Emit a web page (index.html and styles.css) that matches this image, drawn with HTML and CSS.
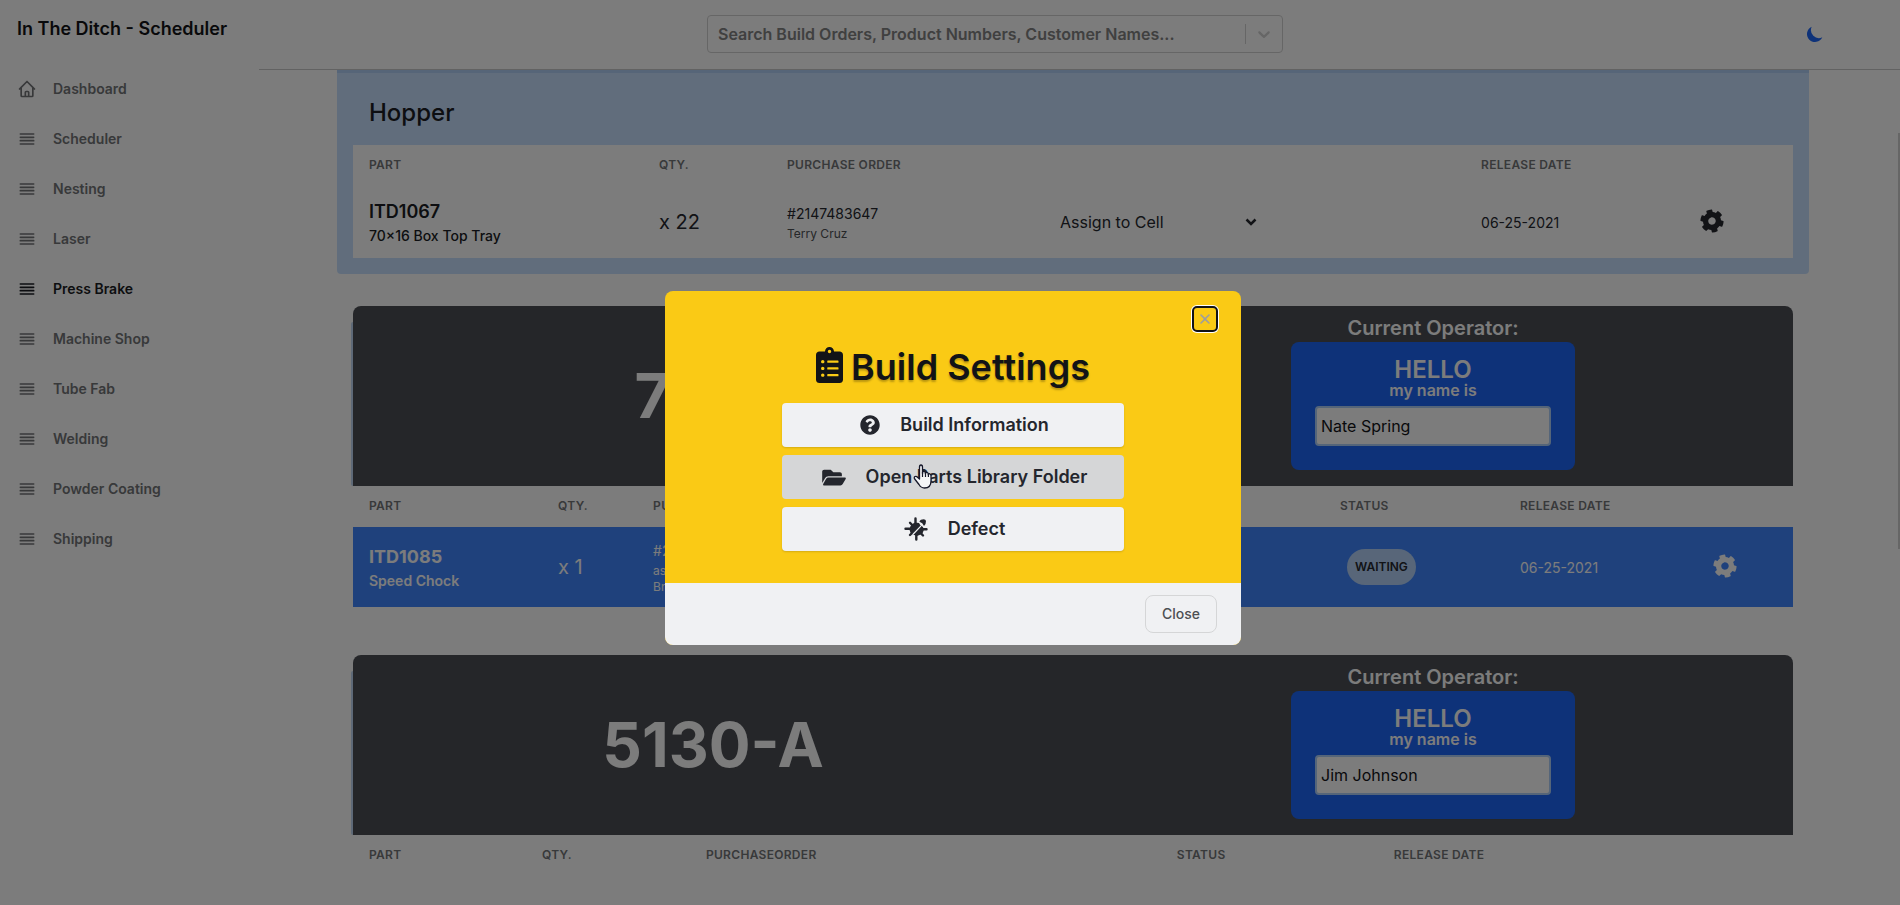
FILE: index.html
```html
<!DOCTYPE html>
<html lang="en">
<head>
<meta charset="utf-8">
<title>In The Ditch - Scheduler</title>
<link rel="stylesheet" href="styles.css">
</head>
<body>
<svg class="sprite" aria-hidden="true">
  <symbol id="i-lines" viewBox="0 0 24 24" fill="none" stroke="currentColor" stroke-width="2" stroke-linecap="round" stroke-linejoin="round"><path d="M4 6h16M4 10h16M4 14h16M4 18h16"/></symbol>
  <symbol id="i-home" viewBox="0 0 24 24" fill="none" stroke="currentColor" stroke-width="2" stroke-linecap="round" stroke-linejoin="round"><path d="M3 12l2-2m0 0l7-7 7 7M5 10v10a1 1 0 001 1h3m10-11l2 2m-2-2v10a1 1 0 01-1 1h-3m-6 0a1 1 0 001-1v-4a1 1 0 011-1h2a1 1 0 011 1v4a1 1 0 001 1m-6 0h6"/></symbol>
  <symbol id="i-gear" viewBox="0 0 512 512" fill="currentColor"><path d="M487.4 315.7l-42.6-24.6c4.3-23.2 4.3-47 0-70.2l42.6-24.6c4.9-2.8 7.1-8.6 5.5-14-11.1-35.6-30-67.8-54.7-94.6-3.8-4.1-10-5.1-14.8-2.3L380.8 110c-17.9-15.4-38.5-27.3-60.8-35.1V25.8c0-5.6-3.9-10.5-9.4-11.7-36.7-8.2-74.3-7.8-109.2 0-5.5 1.2-9.4 6.1-9.4 11.7V75c-22.2 7.9-42.8 19.8-60.8 35.1L88.7 85.5c-4.9-2.8-11-1.9-14.8 2.3-24.7 26.7-43.6 58.9-54.7 94.6-1.7 5.4.6 11.2 5.5 14L67.3 221c-4.3 23.2-4.3 47 0 70.2l-42.6 24.6c-4.9 2.8-7.1 8.6-5.5 14 11.1 35.6 30 67.8 54.7 94.6 3.8 4.1 10 5.1 14.8 2.3l42.6-24.6c17.9 15.4 38.5 27.3 60.8 35.1v49.2c0 5.6 3.9 10.5 9.4 11.7 36.7 8.2 74.3 7.8 109.2 0 5.5-1.2 9.4-6.1 9.4-11.7v-49.2c22.2-7.9 42.8-19.8 60.8-35.1l42.6 24.6c4.9 2.8 11 1.9 14.8-2.3 24.7-26.7 43.6-58.9 54.7-94.6 1.5-5.5-.7-11.3-5.6-14.1zM256 336c-44.100 0-80-35.900-80-80s35.900-80 80-80 80 35.900 80 80-35.900 80-80 80z" transform="rotate(-15 256 256)"/></symbol>
</svg>

<div class="app">
  <aside class="sidebar">
    <h1 class="brand">In The Ditch - Scheduler</h1>
    <nav class="menu">
      <a class="menu-item" href="#"><svg class="menu-icon"><use href="#i-home"/></svg>Dashboard</a>
      <a class="menu-item" href="#"><svg class="menu-icon"><use href="#i-lines"/></svg>Scheduler</a>
      <a class="menu-item" href="#"><svg class="menu-icon"><use href="#i-lines"/></svg>Nesting</a>
      <a class="menu-item" href="#"><svg class="menu-icon"><use href="#i-lines"/></svg>Laser</a>
      <a class="menu-item active" href="#"><svg class="menu-icon"><use href="#i-lines"/></svg>Press Brake</a>
      <a class="menu-item" href="#"><svg class="menu-icon"><use href="#i-lines"/></svg>Machine Shop</a>
      <a class="menu-item" href="#"><svg class="menu-icon"><use href="#i-lines"/></svg>Tube Fab</a>
      <a class="menu-item" href="#"><svg class="menu-icon"><use href="#i-lines"/></svg>Welding</a>
      <a class="menu-item" href="#"><svg class="menu-icon"><use href="#i-lines"/></svg>Powder Coating</a>
      <a class="menu-item" href="#"><svg class="menu-icon"><use href="#i-lines"/></svg>Shipping</a>
    </nav>
  </aside>

  <div class="page">
    <header class="topbar">
      <div class="search">
        <input class="search-input" type="text" aria-label="Search" placeholder="Search Build Orders, Product Numbers, Customer Names...">
        <span class="search-divider"></span>
        <button class="search-toggle" aria-label="Show options"><svg width="20" height="20" viewBox="0 0 20 20" fill="currentColor"><path d="M4.516 7.548c0.436-0.446 1.043-0.481 1.576 0l3.908 3.747 3.908-3.747c0.533-0.481 1.141-0.446 1.574 0 0.436 0.445 0.408 1.197 0 1.615-0.406 0.418-4.695 4.502-4.695 4.502-0.217 0.223-0.502 0.335-0.787 0.335s-0.570-0.112-0.789-0.335c0 0-4.287-4.084-4.695-4.502s-0.436-1.170 0-1.615z"/></svg></button>
      </div>
      <button class="theme" aria-label="Toggle color mode"><svg width="20" height="20" viewBox="0 0 20 20" fill="currentColor"><path d="M17.293 13.293A8 8 0 016.707 2.707a8.001 8.001 0 1010.586 10.586z"/></svg></button>
    </header>

    <main class="content">
      <div class="container">
        <section class="hopper">
          <h2 class="hopper-title">Hopper</h2>
          <table class="grid">
            <colgroup><col class="h-part"><col class="h-qty"><col class="h-po"><col class="h-assign"><col class="h-date"><col></colgroup>
            <thead><tr><th>Part</th><th>Qty.</th><th>Purchase Order</th><th></th><th>Release Date</th><th></th></tr></thead>
            <tbody><tr>
              <td><p class="part">ITD1067</p><p class="part-name">70×16 Box Top Tray</p></td>
              <td class="qty">x 22</td>
              <td class="po"><p class="po-number">#2147483647</p><p class="po-line">Terry Cruz</p></td>
              <td><div class="assign"><select class="assign-select" aria-label="Assign to Cell"><option>Assign to Cell</option></select><svg class="assign-arrow" width="16" height="12" viewBox="0 0 16 12" fill="none" stroke="currentColor" stroke-width="2.500"><path d="M3.500 3.500l4.500 4.500 4.500-4.500"/></svg></div></td>
              <td class="date">06-25-2021</td>
              <td class="tools"><button class="gear" aria-label="Build settings"><svg width="24" height="24"><use href="#i-gear"/></svg></button></td>
            </tr></tbody>
          </table>
        </section>

        <section class="cell">
          <div class="cell-head">
            <h2 class="cell-name">7230</h2>
            <div class="operator">
              <p class="operator-title">Current Operator:</p>
              <div class="badge">
                <p class="badge-hello">HELLO</p>
                <label class="badge-label" for="op1">my name is</label>
                <input class="badge-input" id="op1" type="text" value="Nate Spring">
              </div>
            </div>
          </div>
          <table class="grid">
            <colgroup><col class="c-part"><col class="c-qty"><col class="c-po"><col class="c-status"><col class="c-date"><col></colgroup>
            <thead><tr><th>Part</th><th>Qty.</th><th>PurchaseOrder</th><th>Status</th><th>Release Date</th><th></th></tr></thead>
            <tbody><tr class="current">
              <td><p class="part">ITD1085</p><p class="part-name">Speed Chock</p></td>
              <td class="qty">x 1</td>
              <td class="po"><p class="po-number">#2</p><p class="po-line">as</p><p class="po-line">Br</p></td>
              <td><span class="status">WAITING</span></td>
              <td class="date">06-25-2021</td>
              <td class="tools"><button class="gear" aria-label="Build settings"><svg width="24" height="24"><use href="#i-gear"/></svg></button></td>
            </tr></tbody>
          </table>
        </section>

        <section class="cell">
          <div class="cell-head">
            <h2 class="cell-name">5130-A</h2>
            <div class="operator">
              <p class="operator-title">Current Operator:</p>
              <div class="badge">
                <p class="badge-hello">HELLO</p>
                <label class="badge-label" for="op2">my name is</label>
                <input class="badge-input" id="op2" type="text" value="Jim Johnson">
              </div>
            </div>
          </div>
          <table class="grid">
            <colgroup><col class="d-part"><col class="d-qty"><col class="d-po"><col class="d-status"><col></colgroup>
            <thead><tr><th>Part</th><th>Qty.</th><th>PurchaseOrder</th><th>Status</th><th>Release Date</th></tr></thead>
          </table>
        </section>
      </div>
      <span class="scroll-thumb"></span>
    </main>
  </div>
</div>

<div class="overlay">
  <div class="modal" role="dialog" aria-labelledby="modal-title">
    <div class="modal-body">
      <div class="modal-top">
        <button class="modal-x" aria-label="close"><svg width="16" height="16" viewBox="0 0 20 20" fill="currentColor"><path d="M4.293 4.293a1 1 0 011.414 0L10 8.586l4.293-4.293a1 1 0 111.414 1.414L11.414 10l4.293 4.293a1 1 0 01-1.414 1.414L10 11.414l-4.293 4.293a1 1 0 01-1.414-1.414L8.586 10 4.293 5.707a1 1 0 010-1.414z"/></svg></button>
      </div>
      <h2 class="modal-title" id="modal-title"><svg width="27" height="36" viewBox="0 0 384 512" fill="currentColor"><path d="M336 64h-80c0-35.300-28.700-64-64-64s-64 28.700-64 64H48C21.500 64 0 85.500 0 112v352c0 26.500 21.500 48 48 48h288c26.500 0 48-21.500 48-48V112c0-26.500-21.500-48-48-48zM96 424c-13.300 0-24-10.700-24-24s10.700-24 24-24 24 10.700 24 24-10.700 24-24 24zm0-96c-13.300 0-24-10.700-24-24s10.700-24 24-24 24 10.700 24 24-10.700 24-24 24zm0-96c-13.300 0-24-10.700-24-24s10.700-24 24-24 24 10.700 24 24-10.700 24-24 24zm96-192c13.300 0 24 10.700 24 24s-10.700 24-24 24-24-10.700-24-24 10.700-24 24-24zm128 368c0 4.400-3.600 8-8 8H168c-4.400 0-8-3.600-8-8v-16c0-4.400 3.600-8 8-8h144c4.400 0 8 3.600 8 8v16zm0-96c0 4.400-3.600 8-8 8H168c-4.400 0-8-3.600-8-8v-16c0-4.400 3.600-8 8-8h144c4.400 0 8 3.600 8 8v16zm0-96c0 4.400-3.600 8-8 8H168c-4.400 0-8-3.600-8-8v-16c0-4.400 3.600-8 8-8h144c4.400 0 8 3.600 8 8v16z"/></svg>Build Settings</h2>
      <div class="actions">
        <button class="action"><svg width="20" height="20" viewBox="0 0 512 512" fill="currentColor"><path d="M504 256c0 136.997-111.043 248-248 248S8 392.997 8 256C8 119.083 119.043 8 256 8s248 111.083 248 248zM262.655 90c-54.497 0-89.255 22.957-116.549 63.758-3.536 5.286-2.353 12.415 2.715 16.258l34.699 26.310c5.205 3.947 12.621 3.008 16.665-2.122 17.864-22.658 30.113-35.797 57.303-35.797 20.429 0 45.698 13.148 45.698 32.958 0 14.976-12.363 22.667-32.534 33.976C247.128 238.528 216 254.941 216 296v4c0 6.627 5.373 12 12 12h56c6.627 0 12-5.373 12-12v-1.333c0-28.462 83.186-29.647 83.186-106.667 0-58.002-60.165-102-116.531-102zM256 338c-25.365 0-46 20.635-46 46 0 25.364 20.635 46 46 46s46-20.636 46-46c0-25.365-20.635-46-46-46z"/></svg>Build Information</button>
        <button class="action hovered"><svg width="24" height="21" viewBox="0 0 576 512" fill="currentColor"><path d="M572.694 292.093L500.270 416.248A63.997 63.997 0 0 1 444.989 448H45.025c-18.523 0-30.064-20.093-20.731-36.093l72.424-124.155A64 64 0 0 1 152 256h399.964c18.523 0 30.064 20.093 20.730 36.093zM152 224h328v-48c0-26.510-21.490-48-48-48H272l-64-64H48C21.490 64 0 85.490 0 112v278.046l69.077-118.418C86.214 242.250 117.989 224 152 224z"/></svg>Open Parts Library Folder
          <svg class="cursor" width="19" height="25" viewBox="0 0 19 25"><path d="M6.500 15V3.200Q6.500 1 8 1t1.500 2.200V9.600Q9.700 7 11 7.300 12.500 7.500 12.500 10q.2-2 1.500-1.600 1.400.3 1.400 2.400.2-1.400 1.400-1 1.200.3 1.200 2.200v5Q18 24 11.500 24 8 24 6 20.500L1.700 15Q.7 13.200 2 12.500q1.400-.6 2.800 1z" fill="#f4f5f7" stroke="#16182a" stroke-width="1.300" stroke-linejoin="round"/><path d="M9.500 8v5M12.500 9v4M15.400 10v3" stroke="#16182a" stroke-width="1.200"/></svg>
        </button>
        <button class="action"><svg width="24" height="24" viewBox="0 0 24 24" fill="none" stroke="currentColor" stroke-linecap="round"><path d="M11 5.500l4 .5 1.500 2.500 2.500 1.500.8 3-1.300 3.500-3 1.500-2.500 1-3.500-1.200-3-2-1-3 .8-3.300 2-2.500z" fill="currentColor" stroke="none"/><path d="M17 2.800q4.500-1.400 5 1.200.2 2.800-2 5-1.200-3.200-4.600-4.200.5-1.400 1.600-2z" fill="currentColor" stroke="none"/><path d="M11.500 1.500V6M1.500 11.800H7M18 12.200h4.500M12.300 17v5.500M6 5.800L9 9M6 18L9 15M19 18.500l-3-3" stroke-width="2.400"/><path d="M9.300 17L16.600 9.300" stroke="#f0f1f3" stroke-width="1.200"/></svg>Defect</button>
      </div>
    </div>
    <footer class="modal-foot"><button class="close">Close</button></footer>
  </div>
</div>
</body>
</html>
```
FILE: styles.css
```css
* { box-sizing: border-box; margin: 0; padding: 0; }
body {
  font-family: Inter, "Liberation Sans", sans-serif;
  font-size: 16px;
  line-height: 24px;
  color: #24262d;
  background: #f9f9f9;
  overflow: hidden;
}
button, input, select { font: inherit; color: inherit; border: 0; background: none; }
button svg, h2 svg { display: block; flex: none; }
.sprite { display: none; }

.app { display: flex; height: 100vh; overflow: hidden; }

.sidebar { flex: none; width: 259px; padding: 17px 17px 16px; }
.brand { font-size: 18px; line-height: 24px; font-weight: 600; color: #121317; white-space: nowrap; }
.menu { display: flex; flex-direction: column; margin-top: 23px; }
.menu-item {
  display: flex;
  align-items: center;
  gap: 16px;
  height: 50px;
  font-size: 14px;
  font-weight: 600;
  color: #707275;
  text-decoration: none;
}
.menu-item.active { color: #1a1c23; }
.menu-icon { width: 20px; height: 20px; }

.page { flex: 1; min-width: 0; display: flex; flex-direction: column; }
.topbar {
  flex: none;
  display: grid;
  grid-template-columns: 448fr 576px 617fr;
  align-items: center;
  height: 70px;
  padding-bottom: 1px;
  border-bottom: 1px solid #c4c4c4;
}
.search {
  grid-column: 2;
  display: flex;
  align-items: center;
  height: 38px;
  border: 1px solid #cccccc;
  border-radius: 4px;
}
.search-input { flex: 1; min-width: 0; height: 36px; padding: 0 10px; font-weight: 600; outline: 0; }
.search-input::placeholder { color: #808080; opacity: 1; }
.search-divider { width: 1px; height: 20px; background: #cccccc; }
.search-toggle { padding: 8px; color: #cccccc; }
.theme { justify-self: end; margin-right: 75px; color: #1c64f2; }

.content { position: relative; flex: 1; min-height: 0; overflow: hidden; padding: 0 13px 0 0; }
.container { max-width: 1472px; margin: 0 auto; }
.scroll-thumb { position: absolute; right: 0; top: 63px; width: 2px; height: 416px; background: #cccccc; }

.hopper { padding: 0 16px 16px; background: #c3dbf9; border-top: 3px solid #adcbf0; border-radius: 0 0 4px 4px; }
.hopper-title { padding: 28px 16px 20px; font-size: 24px; line-height: 24px; font-weight: 500; color: #1a1c23; }

.grid { width: 100%; table-layout: fixed; border-collapse: collapse; background: #f9f9f9; }
.grid th {
  height: 41px;
  padding: 0 16px 2px;
  font-size: 12px;
  line-height: 16px;
  font-weight: 600;
  letter-spacing: 0.025em;
  text-align: left;
  text-transform: uppercase;
  color: #707275;
}
.grid td { padding: 12px 16px; vertical-align: middle; height: 72px; }
.h-part { width: 20.14%; } .h-qty { width: 8.89%; } .h-po { width: 18.96%; } .h-assign { width: 29.24%; } .h-date { width: 15.2%; }
.c-part { width: 13.13%; } .c-qty { width: 6.6%; } .c-po { width: 47.7%; } .c-status { width: 12.5%; } .c-date { width: 13.4%; }
.d-part { width: 12.01%; } .d-qty { width: 11.39%; } .d-po { width: 32.7%; } .d-status { width: 15.07%; }

.part { font-size: 18px; line-height: 28px; font-weight: 600; color: #1a1c23; }
.part-name { font-size: 14px; line-height: 20px; font-weight: 500; color: #1a1c23; }
.qty { font-size: 20px; }
.grid .po, .grid .date { padding-top: 14px; }
.po-number { font-size: 14px; line-height: 20px; margin-bottom: 2px; }
.po-line { font-size: 12px; line-height: 16px; color: #4c4f52; }
.date { font-size: 14px; line-height: 20px; }
.assign { position: relative; width: 200px; }
.assign-select { display: block; width: 100%; height: 24px; appearance: none; outline: 0; }
.assign-arrow { position: absolute; right: 1px; top: 6px; color: #24262d; pointer-events: none; }
.gear { display: block; }
.grid .tools { padding-bottom: 14px; color: #24262d; }

.current, .current .part, .current .part-name, .current .po-line, .grid .current .tools { color: #f9f9f9; }
.current { background: #3f83f8; }
.grid .current td { height: 80px; }
.current .part { font-weight: 700; }
.current .part-name { font-weight: 600; }
.status {
  display: inline-block;
  margin-left: 7px;
  padding: 8px;
  border-radius: 18px;
  background: #b0cdf2;
  font-size: 12px;
  line-height: 20px;
  font-weight: 600;
  color: #24262d;
}

.cell { margin: 32px 16px 0; }
.cell + .cell { margin-top: 48px; }
.cell-head {
  position: relative;
  display: grid;
  grid-template-columns: 1fr 1fr;
  justify-items: center;
  height: 180px;
  background: #4a4d53;
  border-radius: 8px 8px 0 0;
}
.cell-head::before { content: ""; position: absolute; left: -2px; top: 16px; bottom: 0; width: 2px; background: #bcd3ee; border-radius: 2px 0 0 2px; }
.cell-name { align-self: center; font-size: 62px; line-height: 60px; font-weight: 700; color: #f9f9f9; }
.operator { padding-top: 8px; text-align: center; color: #f9f9f9; }
.operator-title { font-size: 20px; line-height: 28px; font-weight: 600; }
.badge { display: flex; flex-direction: column; width: 284px; height: 128px; padding: 16px 24px; border-radius: 8px; background: #1c64f2; }
.badge-hello { font-size: 24px; line-height: 24px; font-weight: 600; }
.badge-label { font-size: 16px; line-height: 16px; font-weight: 600; margin-bottom: 8px; }
.badge-input { height: 40px; padding: 0 4px; border: 2px solid #abcbf2; border-radius: 4px; background: #f9f9f9; color: #121317; }

.overlay {
  position: fixed;
  inset: 0;
  display: flex;
  align-items: center;
  justify-content: center;
  padding: 31px 0 0 6px;
  background: rgba(0, 0, 0, 0.5);
}
.modal { width: 576px; border-radius: 8px; overflow: hidden; background: #faca15; }
.modal-body { padding: 16px 24px 32px; }
.modal-top { display: flex; justify-content: flex-end; }
.modal-x {
  display: grid;
  place-items: center;
  width: 24px;
  height: 24px;
  border-radius: 4px;
  box-shadow: 0 0 0 2px #ffffff;
  outline: 2px solid #121317;
  outline-offset: -1px;
  color: #9e9e9e;
}
.modal-title {
  display: flex;
  justify-content: center;
  gap: 8px;
  margin: 16px 0;
  font-size: 36px;
  line-height: 40px;
  font-weight: 600;
  color: #121317;
  text-shadow: 0 2px 2px rgba(0, 0, 0, 0.25);
}
.actions { display: flex; flex-direction: column; gap: 8px; width: 342px; margin: 0 auto; }
.action {
  position: relative;
  display: flex;
  align-items: center;
  justify-content: center;
  gap: 20px;
  height: 44px;
  padding-left: 3px;
  border-radius: 4px;
  background: #f0f1f3;
  box-shadow: 0 1px 2px rgba(0, 0, 0, 0.15);
  font-size: 18px;
  font-weight: 600;
  color: #24262d;
}
.hovered { background: #d5d6d7; box-shadow: none; }
.cursor { position: absolute; left: 131px; top: 9px; }
.modal-foot { display: flex; justify-content: flex-end; padding: 12px 24px; background: #f0f1f3; }
.close { height: 38px; width: 72px; border: 1px solid #d5d6d7; border-radius: 8px; font-size: 14px; line-height: 20px; font-weight: 500; color: #4c4f52; }
```
